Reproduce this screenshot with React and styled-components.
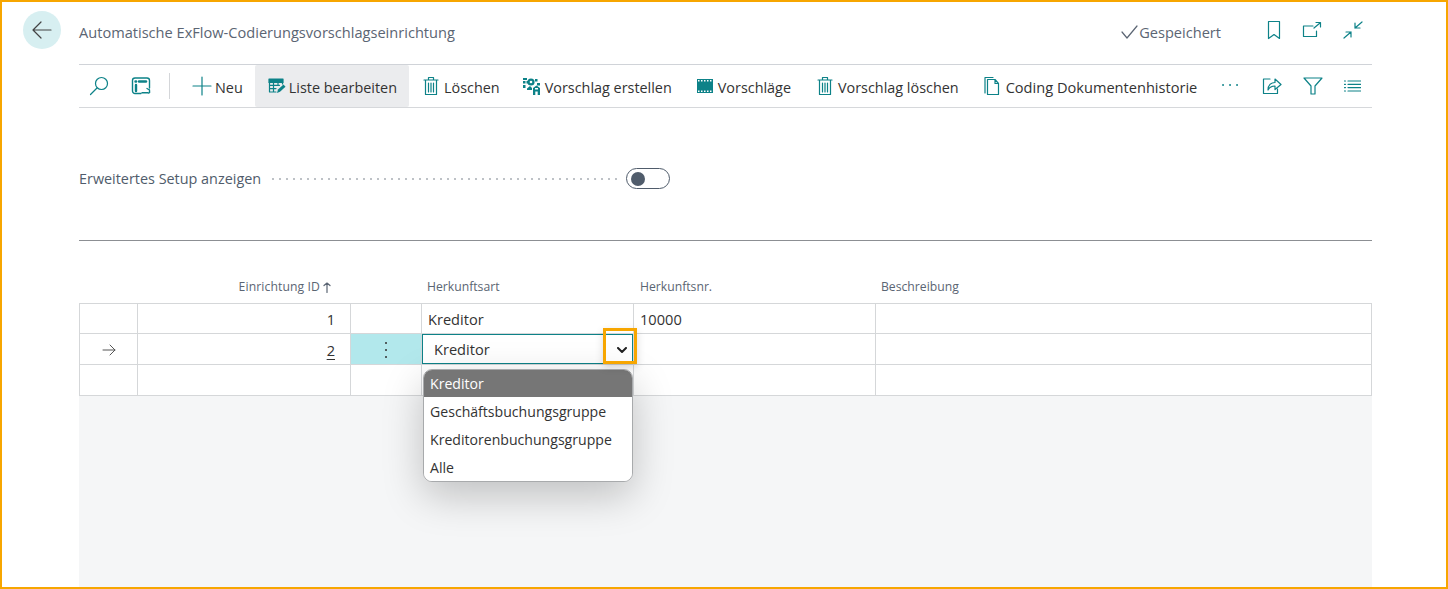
import React from "react";
import styled, { createGlobalStyle } from "styled-components";

const Global = createGlobalStyle`
  html, body { margin: 0; padding: 0; height: 589px; overflow: hidden; background: #fff; }
  #root { height: 589px; }
  * { box-sizing: border-box; }
`;

const FONT = `"Open Sans", "Noto Sans", "Liberation Sans", sans-serif`;
const TEAL = "#0d8288";
const FS = "14.6px";

const Frame = styled.div`
  width: 1448px; height: 589px;
  border: 2px solid #f7a600;
  background: #fff;
  font-family: ${FONT};
  font-size: ${FS};
  color: #333;
  overflow: hidden;
  display: flex;
`;
const BackCol = styled.div`
  width: 77px; flex: none; padding: 9px 0 0 21px;
`;
const BackButton = styled.div`
  width: 38px; height: 38px; border-radius: 50%;
  background: #d7eff1; display: flex; align-items: center; justify-content: center;
`;
const Main = styled.div`
  width: 1293px; flex: none; display: flex; flex-direction: column; height: 100%;
`;
const TitleBar = styled.div`
  height: 62px; display: flex; align-items: center; flex: none; padding-bottom: 2px;
`;
const Title = styled.div`
  font-size: ${FS}; color: #5b6573; flex: 1;
`;
const Saved = styled.div`
  display: flex; align-items: center; gap: 0; color: #5b6573; font-size: ${FS}; margin-right: 46px;
`;
const TitleIcons = styled.div`
  display: flex; align-items: center; gap: 21px; padding-right: 9px; margin-top: -4px;
`;
const Toolbar = styled.div`
  height: 44px; flex: none; border-top: 1px solid #d0d3d8; border-bottom: 1px solid #d6d8db;
  display: flex; align-items: center; color: #333;
`;
const Tool = styled.div`
  display: flex; align-items: center; gap: ${p => p.$gap ?? 4}px; height: 42px;
  padding: 0 ${p => p.$pr ?? 12}px ${p => p.$pb ?? 0}px ${p => p.$pl ?? 12}px;
  background: ${p => (p.$active ? "#ebecee" : "transparent")};
  border-radius: 2px; white-space: nowrap;
`;
const ToolLabel = styled.span`
  font-size: ${p => p.$fs ?? "14.4px"}; margin-top: 2px;
`;
const IconSlot = styled.div`
  width: ${p => p.$w ?? 24}px; display: flex; justify-content: center; align-items: center; flex: none;
`;
const Sep = styled.div`
  width: 1px; height: 26px; background: #d4d6d9; margin: 0 10px 0 12px; flex: none;
`;
const ToolSpacer = styled.div`flex: 1;`;
const Options = styled.div`
  height: 133px; flex: none; border-bottom: 1px solid #8c8f93;
  display: flex; align-items: flex-start; padding-top: 60px;
`;
const OptionLabel = styled.div`
  color: #505c6b; font-size: 14.4px; line-height: 22px; white-space: nowrap; width: 183px;
`;
const Dots = styled.div`
  width: 348px; margin: 0 6px 0 10px; height: 22px; flex: none;
  background: radial-gradient(circle at 1px 50%, #bcc0c5 0.7px, transparent 1px) 0 0 / 7px 100% repeat-x;
`;
const Switch = styled.div`
  width: 44px; height: 21px; border: 1px solid #505c6b; border-radius: 11px;
  display: flex; align-items: center; padding-left: 4px; flex: none;
`;
const Knob = styled.div`width: 14px; height: 14px; border-radius: 50%; background: #505c6b;`;

const HeaderRow = styled.div`
  display: grid; grid-template-columns: 59px 213px 71px 212px 241px 497px; height: 62px; flex: none;
  align-items: end; font-size: 12.2px; color: #5b6573;
`;
const Head = styled.div`
  padding: 0 6px 8px ${p => p.$pl ?? 6}px; line-height: 16px;
`;
const SortHead = styled(Head)`
  display: flex; justify-content: flex-end; align-items: center; gap: 3px; padding-right: 20px;
  letter-spacing: 0.1px;
`;
const Table = styled.div`
  position: relative; flex: none; border-top: 1px solid #d5d7d9; border-left: 1px solid #d5d7d9;
`;
const Row = styled.div`
  display: grid; grid-template-columns: 58px 213px 71px 212px 242px 496px; height: ${p => p.$h ?? 31}px;
`;
const Cell = styled.div`
  border-right: 1px solid #d5d7d9; border-bottom: 1px solid #d5d7d9;
  display: flex; align-items: center; padding: 1px 6px 0; font-size: ${FS}; color: #333;
  justify-content: ${p => p.$align ?? "flex-start"};
  background: ${p => p.$bg ?? "#fff"};
`;
const IdValue = styled.span`
  padding-right: 9px; text-decoration: ${p => (p.$u ? "underline" : "none")};
  text-underline-offset: 3px;
`;
const EditCell = styled(Cell)`padding: 0;`;
const EditorBox = styled.div`
  width: 211px; height: 30px; border: 1px solid ${TEAL};
  display: flex; align-items: center; padding-left: 11px; justify-content: space-between;
  background: #fff;
`;
const Chevron = styled.div`width: 20px; display: flex; justify-content: center; margin-top: 2px;`;
const Highlight = styled.div`
  position: absolute; left: 523px; top: 24px; width: 34px; height: 36px;
  border: 3px solid #f7a600; box-shadow: 0 3px 8px rgba(0,0,0,.15); z-index: 3;
`;
const Menu = styled.div`
  position: absolute; left: 343px; top: 65px; width: 210px; height: 113px;
  background: #fff; border-radius: 9px; z-index: 2; overflow: hidden;
  border: 1px solid #a8aaac;
  box-shadow: 0 14px 40px rgba(0,0,0,.22);
`;
const MenuItem = styled.div`
  height: ${p => (p.$sel ? 27 : 28)}px; display: flex; align-items: center; padding: 0 0 ${p => (p.$sel ? 1 : 0)}px 6px;
  font-size: 14.1px;
  color: ${p => (p.$sel ? "#fff" : "#333")};
  background: ${p => (p.$sel ? "#767676" : "#fff")};
`;
const GreyArea = styled.div`flex: 1; background: #f5f6f7;`;

const S = ({ children, w = 20, h = 20, vb = "0 0 20 20", sw = 1.2, c = TEAL }) => (
  <svg width={w} height={h} viewBox={vb} fill="none" stroke={c} strokeWidth={sw} strokeLinecap="round" strokeLinejoin="round">{children}</svg>
);

const Trash = () => (
  <S w={16} h={20} vb="0 0 16 20">
    <path d="M1 4h14M5.5 4V1.5h5V4M2.5 4v14.5h11V4M5.5 7v9M8 7v9M10.5 7v9" />
  </S>
);

export default function App() {
  return (
    <Frame>
      <Global />
      <BackCol>
        <BackButton>
          <S w={22} h={20} vb="0 0 22 20" c="#444"><path d="M20 10H2M10 2l-8 8 8 8" /></S>
        </BackButton>
      </BackCol>
      <Main>
        <TitleBar>
          <Title>Automatische ExFlow-Codierungsvorschlagseinrichtung</Title>
          <Saved>
            <S w={18} h={16} vb="0 0 18 16" c="#5b6573"><path d="M1 8l5 6L16 2" /></S>
            Gespeichert
          </Saved>
          <TitleIcons>
            <S w={14} h={20} vb="0 0 14 20"><path d="M1.5 1.5h11v17L7 14.5l-5.500 4z" /></S>
            <S w={20} h={18} vb="0 0 20 18"><path d="M11 5H1.500v10.500h13V10M12 7l6-5M14 1.500h4.500V6" /></S>
            <S w={20} h={20} vb="0 0 20 20"><path d="M12 8l7-6M12 3v5h5M8 12l-7 6M3 12h5v5" /></S>
          </TitleIcons>
        </TitleBar>
        <Toolbar>
          <Tool $pl={10} $pr={11}>
            <S w={20} h={20} vb="0 0 20 20"><circle cx="12.500" cy="7.500" r="6" /><path d="M8 12L1.500 18.500" /></S>
          </Tool>
          <Tool $pl={11} $pr={6}>
            <S w={20} h={20} vb="0 0 20 20" sw={1.4}>
              <path d="M10 17.500H4a2.500 2.500 0 0 1-2.500-2.500V4.500A2.500 2.500 0 0 1 4 2h12a2.500 2.500 0 0 1 2.500 2.500V12" />
              <path d="M8 5.500h7" strokeWidth={2.4} />
              <path d="M4.500 5.500h.6M5 9v6" strokeWidth={2.4} />
              <path d="M11 16.800h6a1 1 0 0 0 1.500-1.300V14M16 12.500l2.500 1.500" />
            </S>
          </Tool>
          <Sep />
          <Tool $pl={12} $pr={12} $gap={3}>
            <S w={20} h={20}><path d="M10 1v18M1 10h18" /></S><ToolLabel>Neu</ToolLabel>
          </Tool>
          <Tool $active $pl={13} $pr={12} $gap={3}>
            <S w={18} h={18} vb="0 0 18 18">
              <path d="M1 2h14v3.500H1z" fill={TEAL} />
              <path d="M1.500 5v10h6.500M1.500 8.300h10M1.500 11.600h6.500M5.500 5v10M10 5v3.300M14.500 5v2" />
              <path d="M9 16l1-3.500 5.500-5 2 2.200-5.500 5z" fill={TEAL} stroke="none" />
            </S><ToolLabel>Liste bearbeiten</ToolLabel>
          </Tool>
          <Tool $pl={14} $pr={10} $gap={5}><IconSlot $w={16}><Trash /></IconSlot><ToolLabel>Löschen</ToolLabel></Tool>
          <Tool $pl={12} $pr={12} $gap={4}>
            <S w={19} h={19} vb="0 0 19 19" sw={0}>
              <path d="M1 1h4v2H1zM1 4h2.500v2.500H1zM4.500 4H7v2.500H4.500zM1 8h2.500v3H1zM13 2h2.500v2.500H13zM15 6h3v2.500h-3z" fill={TEAL} />
              <circle cx="9" cy="5" r="3.600" fill={TEAL} />
              <circle cx="9" cy="5" r="1.300" fill="#fff" />
              <path d="M5 11.500l3-2.500 2 2v2H5z" fill={TEAL} />
              <path d="M11 18v-7l3.500-2.500L18 11v7h-2.300v-3.500h-2.400V18zM13 11h3v1.500h-3z" fill={TEAL} fillRule="evenodd" />
            </S><ToolLabel>Vorschlag erstellen</ToolLabel>
          </Tool>
          <Tool $pl={13} $pr={13} $gap={5}>
            <S w={16} h={16} vb="0 0 16 16" sw={0}>
              <path d="M0 1h16v14H0z" fill={TEAL} />
              <path d="M1 2h1.500v1.500H1zM4 2h1.500v1.500H4zM7 2h1.500v1.500H7zM10 2h1.500v1.500H10zM13 2h1.500v1.500H13zM1 12.500h1.500V14H1zM4 12.500h1.500V14H4zM7 12.500h1.500V14H7zM10 12.500h1.500V14H10zM13 12.500h1.500V14H13z" fill="#fff" />
            </S><ToolLabel>Vorschläge</ToolLabel>
          </Tool>
          <Tool $pl={13} $pr={13} $gap={5}><IconSlot $w={16}><Trash /></IconSlot><ToolLabel>Vorschlag löschen</ToolLabel></Tool>
          <Tool $pl={12} $pr={12} $gap={6}>
            <S w={16} h={20} vb="0 0 16 20">
              <path d="M1 17V1.500h8M3.500 18.500V3.500h7.500l3.500 4v11zM11 3.500v4h3.500" />
            </S><ToolLabel $fs="14.6px">Coding Dokumentenhistorie</ToolLabel>
          </Tool>
          <ToolSpacer />
          <Tool $pl={0} $pr={22} $pb={3}>
            <S w={20} h={6} vb="0 0 20 6" sw={1.800}><path d="M3 3h.1M10 3h.1M17 3h.1" /></S>
          </Tool>
          <Tool $pl={0} $pr={21}>
            <S w={20} h={18} vb="0 0 20 18"><path d="M8 2H1.500v14.500h14V12M6 13c0-5 3-7.500 7-7.500V2l6 5.500-6 5V9c-3 0-5.500 1-7 4z" /></S>
          </Tool>
          <Tool $pl={0} $pr={21}>
            <S w={20} h={18} vb="0 0 20 18"><path d="M1 1h18l-7 8v8H8V9z" /></S>
          </Tool>
          <Tool $pl={0} $pr={11}>
            <S w={17} h={14} vb="0 0 17 14"><path d="M.5 2h1M4 2h13M.5 5.300h1M4 5.300h13M.5 8.600h1M4 8.600h13M.5 12h1M4 12h13" /></S>
          </Tool>
        </Toolbar>
        <Options>
          <OptionLabel>Erweitertes Setup anzeigen</OptionLabel>
          <Dots />
          <Switch><Knob /></Switch>
        </Options>
        <HeaderRow>
          <Head />
          <SortHead>
            Einrichtung ID
            <S w={8} h={11} vb="0 0 8 11" c="#5b6573" sw={1.2}><path d="M4 10.500V1M1 3.500L4 1l3 2.500" /></S>
          </SortHead>
          <Head />
          <Head $pl={5}>Herkunftsart</Head>
          <Head>Herkunftsnr.</Head>
          <Head>Beschreibung</Head>
        </HeaderRow>
        <Table>
          <Row $h={30}>
            <Cell />
            <Cell $align="flex-end"><IdValue>1</IdValue></Cell>
            <Cell />
            <Cell>Kreditor</Cell>
            <Cell>10000</Cell>
            <Cell />
          </Row>
          <Row>
            <Cell $align="center">
              <S w={14} h={12} vb="0 0 14 12" c="#555" sw={1}><path d="M1 6h12M8 1l5 5-5 5" /></S>
            </Cell>
            <Cell $align="flex-end"><IdValue $u>2</IdValue></Cell>
            <Cell $bg="#b2e8ec" $align="center">
              <S w={4} h={18} vb="0 0 4 18" c="#333" sw={2}><path d="M2 2h.01M2 9h.01M2 16h.01" /></S>
            </Cell>
            <EditCell>
              <EditorBox>
                Kreditor
                <Chevron>
                  <S w={10} h={7} vb="0 0 10 7" c="#222" sw={2}><path d="M1 1l4 4 4-4" /></S>
                </Chevron>
              </EditorBox>
            </EditCell>
            <Cell />
            <Cell />
          </Row>
          <Row>
            <Cell /><Cell /><Cell /><Cell /><Cell /><Cell />
          </Row>
          <Highlight />
          <Menu>
            <MenuItem $sel>Kreditor</MenuItem>
            <MenuItem>Geschäftsbuchungsgruppe</MenuItem>
            <MenuItem>Kreditorenbuchungsgruppe</MenuItem>
            <MenuItem>Alle</MenuItem>
          </Menu>
        </Table>
        <GreyArea />
      </Main>
    </Frame>
  );
}
